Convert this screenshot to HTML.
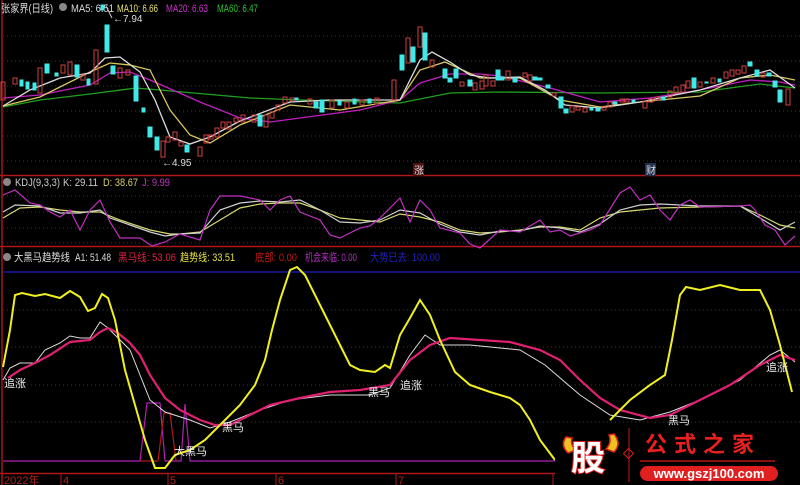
<!DOCTYPE html>
<html><head><meta charset="utf-8"><style>
html,body{margin:0;padding:0;background:#000;width:800px;height:485px;overflow:hidden}
svg{display:block}
text{font-family:"Liberation Sans","Noto Sans CJK SC",sans-serif}
</style></head><body>
<svg width="800" height="485" viewBox="0 0 800 485" xmlns="http://www.w3.org/2000/svg">
<rect width="800" height="485" fill="#000"/>
<line x1="2" y1="0" x2="2" y2="485" stroke="#a01818" stroke-width="1.5"/>
<line x1="0" y1="175.5" x2="800" y2="175.5" stroke="#b01818" stroke-width="1.5"/>
<line x1="0" y1="246.5" x2="800" y2="246.5" stroke="#b01818" stroke-width="1.5"/>
<line x1="0" y1="473.5" x2="800" y2="473.5" stroke="#b01818" stroke-width="1.5"/>
<g stroke="#7a1a1a" stroke-dasharray="1,3" stroke-width="1">
<line x1="3" y1="36" x2="800" y2="36"/><line x1="3" y1="61" x2="800" y2="61"/><line x1="3" y1="86" x2="800" y2="86"/><line x1="3" y1="111" x2="800" y2="111"/><line x1="3" y1="136" x2="800" y2="136"/><line x1="3" y1="161" x2="800" y2="161"/>
<line x1="3" y1="196" x2="800" y2="196"/><line x1="3" y1="212" x2="800" y2="212"/><line x1="3" y1="228" x2="800" y2="228"/><line x1="3" y1="243" x2="800" y2="243"/>
<line x1="3" y1="310" x2="800" y2="310"/><line x1="3" y1="347" x2="800" y2="347"/><line x1="3" y1="385" x2="800" y2="385"/><line x1="3" y1="422" x2="800" y2="422"/>
</g>
<g font-size="11">
<text x="1" y="12" fill="#ddd" textLength="52" lengthAdjust="spacingAndGlyphs">张家界(日线)</text>
<circle cx="63" cy="7" r="4" fill="#888"/>
<text x="71" y="12" fill="#ddd" textLength="43" lengthAdjust="spacingAndGlyphs">MA5: 6.51</text>
<text x="117" y="12" fill="#e8e070" textLength="41" lengthAdjust="spacingAndGlyphs">MA10: 6.66</text>
<text x="166" y="12" fill="#d030d0" textLength="42" lengthAdjust="spacingAndGlyphs">MA20: 6.63</text>
<text x="217" y="12" fill="#30c030" textLength="41" lengthAdjust="spacingAndGlyphs">MA60: 6.47</text>
<circle cx="7" cy="182" r="4" fill="#888"/>
<text x="15" y="186" fill="#ccc" textLength="45" lengthAdjust="spacingAndGlyphs">KDJ(9,3,3)</text>
<text x="63" y="186" fill="#ccc" textLength="35" lengthAdjust="spacingAndGlyphs">K: 29.11</text>
<text x="103" y="186" fill="#d8d070" textLength="35" lengthAdjust="spacingAndGlyphs">D: 38.67</text>
<text x="142" y="186" fill="#c030c0" textLength="28" lengthAdjust="spacingAndGlyphs">J: 9.99</text>
<circle cx="7" cy="257" r="4" fill="#888"/>
<text x="14" y="261" fill="#ddd" textLength="56" lengthAdjust="spacingAndGlyphs">大黑马趋势线</text>
<text x="75" y="261" fill="#ddd" textLength="36" lengthAdjust="spacingAndGlyphs">A1: 51.48</text>
<text x="118" y="261" fill="#e02040" textLength="58" lengthAdjust="spacingAndGlyphs">黑马线: 53.06</text>
<text x="180" y="261" fill="#e8e040" textLength="55" lengthAdjust="spacingAndGlyphs">趋势线: 33.51</text>
<text x="255" y="261" fill="#c01818" textLength="42" lengthAdjust="spacingAndGlyphs">底部: 0.00</text>
<text x="305" y="261" fill="#b030c0" textLength="52" lengthAdjust="spacingAndGlyphs">机会来临: 0.00</text>
<text x="370" y="261" fill="#2020c0" textLength="70" lengthAdjust="spacingAndGlyphs">大势已去: 100.00</text>
</g>
<g fill="none" stroke-width="1.3">
<polyline stroke="#20a020" points="3,107 40,100 90,94 136,88 160,90 250,98 300,100 400,103 450,93 500,92 600,93 700,92 760,84 795,88"/>
<polyline stroke="#c020c0" points="3,98 40,95 90,85 110,73 130,72 150,80 200,102 240,118 270,122 300,118 360,110 400,100 420,83 450,74 480,74 500,76 550,88 600,102 650,98 700,90 750,80 780,82 795,85"/>
<polyline stroke="#d8c860" points="3,106 40,97 90,72 110,63 130,65 150,70 170,110 190,135 210,143 240,125 290,105 340,110 400,100 420,70 445,62 480,78 520,78 560,100 600,107 640,102 700,96 740,78 770,75 795,80"/>
<polyline stroke="#ddd" points="3,106 30,90 60,78 90,73 105,58 120,57 140,72 155,100 170,137 190,144 210,137 240,121 290,102 330,100 400,100 420,60 432,52 450,62 470,75 490,78 520,77 545,90 565,105 600,108 640,102 700,90 740,78 770,70 795,88"/>
</g>
<g stroke-width="1">
<g fill="none" stroke="#d04040">
<rect x="1" y="82" width="4" height="18"/><rect x="13" y="78" width="4" height="6"/><rect x="38" y="68" width="4" height="25"/><rect x="61" y="65" width="4" height="8"/><rect x="68" y="62" width="4" height="13"/><rect x="81" y="75" width="4" height="5"/><rect x="94" y="50" width="4" height="34"/><rect x="118" y="68" width="4" height="10"/><rect x="126" y="70" width="4" height="5"/><rect x="161" y="141" width="4" height="16"/><rect x="166" y="137" width="4" height="5"/><rect x="173" y="132" width="4" height="8"/><rect x="179" y="142" width="4" height="4"/><rect x="198" y="147" width="4" height="9"/><rect x="204" y="135" width="4" height="8"/><rect x="209" y="135" width="4" height="4"/><rect x="215" y="128" width="4" height="9"/><rect x="221" y="122" width="4" height="6"/><rect x="227" y="122" width="4" height="7"/><rect x="234" y="118" width="4" height="4"/><rect x="241" y="115" width="4" height="7"/><rect x="252" y="115" width="4" height="7"/><rect x="264" y="115" width="4" height="12"/><rect x="270" y="112" width="4" height="6"/><rect x="276" y="105" width="4" height="5"/><rect x="283" y="97" width="4" height="6"/><rect x="290" y="98" width="4" height="3"/><rect x="308" y="99" width="4" height="5"/><rect x="330" y="100" width="4" height="8"/><rect x="345" y="102" width="4" height="6"/><rect x="360" y="100" width="4" height="5"/><rect x="375" y="98" width="4" height="6"/><rect x="392" y="80" width="4" height="20"/>
<rect x="406" y="38" width="4" height="25"/><rect x="418" y="27" width="4" height="20"/><rect x="430" y="60" width="4" height="7"/><rect x="460" y="82" width="4" height="4"/><rect x="473" y="83" width="4" height="7"/><rect x="480" y="81" width="4" height="8"/><rect x="484" y="75" width="4" height="11"/><rect x="491" y="81" width="4" height="5"/><rect x="506" y="71" width="4" height="9"/><rect x="523" y="73" width="4" height="4"/><rect x="528" y="75" width="4" height="6"/><rect x="552" y="93" width="4" height="3"/><rect x="570" y="106" width="4" height="6"/><rect x="576" y="107" width="4" height="3"/><rect x="583" y="108" width="4" height="4"/><rect x="602" y="107" width="4" height="3"/><rect x="608" y="102" width="4" height="5"/><rect x="620" y="99" width="4" height="3"/><rect x="625" y="99" width="4" height="3"/><rect x="643" y="101" width="4" height="7"/><rect x="649" y="99" width="4" height="3"/><rect x="655" y="97" width="4" height="3"/><rect x="668" y="91" width="4" height="6"/><rect x="674" y="87" width="4" height="6"/><rect x="681" y="85" width="4" height="7"/><rect x="686" y="81" width="4" height="7"/><rect x="698" y="82" width="4" height="5"/><rect x="711" y="78" width="4" height="5"/><rect x="724" y="72" width="4" height="6"/><rect x="730" y="70" width="4" height="6"/><rect x="736" y="70" width="4" height="4"/><rect x="742" y="66" width="4" height="7"/><rect x="761" y="73" width="4" height="4"/><rect x="786" y="89" width="4" height="16"/>
</g>
<g fill="#40e8e8" stroke="#40e8e8">
<rect x="20" y="80" width="3" height="6"/><rect x="26" y="82" width="3" height="7"/><rect x="33" y="83" width="3" height="7"/><rect x="45" y="64" width="4" height="9"/><rect x="55" y="73" width="3" height="3"/><rect x="75" y="65" width="4" height="12"/><rect x="87" y="79" width="3" height="6"/><rect x="105" y="25" width="4" height="27"/><rect x="101" y="5" width="3" height="5"/><rect x="111" y="66" width="4" height="8"/><rect x="134" y="76" width="4" height="25"/><rect x="142" y="108" width="3" height="4"/><rect x="148" y="127" width="4" height="10"/><rect x="155" y="137" width="4" height="13"/><rect x="185" y="145" width="4" height="7"/><rect x="258" y="115" width="4" height="11"/><rect x="295" y="98" width="3" height="2"/><rect x="314" y="102" width="4" height="6"/><rect x="320" y="100" width="4" height="12"/><rect x="338" y="101" width="3" height="4"/><rect x="353" y="99" width="3" height="5"/><rect x="368" y="99" width="3" height="4"/>
<rect x="400" y="55" width="4" height="15"/><rect x="411" y="47" width="4" height="15"/><rect x="423" y="33" width="4" height="27"/><rect x="443" y="69" width="4" height="9"/><rect x="448" y="78" width="4" height="4"/><rect x="454" y="69" width="4" height="9"/><rect x="468" y="80" width="4" height="6"/><rect x="496" y="70" width="4" height="10"/><rect x="501" y="77" width="3" height="3"/><rect x="513" y="78" width="4" height="4"/><rect x="533" y="77" width="4" height="3"/><rect x="538" y="78" width="4" height="2"/><rect x="546" y="85" width="4" height="3"/><rect x="559" y="97" width="4" height="11"/><rect x="564" y="109" width="4" height="4"/><rect x="590" y="108" width="3" height="2"/><rect x="596" y="108" width="4" height="3"/><rect x="613" y="102" width="4" height="2"/><rect x="632" y="100" width="3" height="2"/><rect x="662" y="97" width="3" height="3"/><rect x="692" y="78" width="4" height="10"/><rect x="705" y="82" width="3" height="1"/><rect x="718" y="79" width="3" height="3"/><rect x="748" y="62" width="4" height="4"/><rect x="755" y="70" width="4" height="6"/><rect x="767" y="73" width="4" height="3"/><rect x="773" y="81" width="4" height="6"/><rect x="778" y="90" width="4" height="12"/>
</g>
</g>
<text x="113" y="22" font-size="10" fill="#ddd">←7.94</text>
<line x1="106" y1="6" x2="112" y2="18" stroke="#ccc"/>
<text x="162" y="166" font-size="10" fill="#ddd">←4.95</text>
<rect x="413" y="163" width="11" height="13" fill="#501010"/>
<text x="414" y="174" font-size="10" fill="#ddd">涨</text>
<rect x="645" y="163" width="11" height="13" fill="#203050"/>
<text x="646" y="174" font-size="10" fill="#ddd">财</text>
<g fill="none" stroke-width="1.2">
<polyline stroke="#d8d870" points="3,218 20,208 40,207 60,210 80,212 100,212 120,220 150,230 170,234 180,234 200,232 220,220 240,208 260,204 280,203 300,203 320,210 340,218 360,220 380,222 400,214 420,217 440,222 460,230 480,233 500,232 520,230 540,227 560,227 580,230 600,218 620,212 640,210 660,208 700,207 740,206 760,215 780,225 795,228"/>
<polyline stroke="#cfcfcf" points="3,212 15,205 40,206 60,213 80,213 100,210 110,218 130,225 150,232 165,236 180,234 200,233 220,210 240,203 260,201 280,202 300,200 320,210 340,222 360,223 380,220 400,210 420,213 440,224 460,232 480,235 500,231 520,231 540,226 560,228 580,232 600,224 620,210 640,205 660,204 700,206 740,206 760,218 780,230 795,222"/>
<polyline stroke="#c030c0" points="3,195 15,190 30,203 40,205 50,212 60,217 70,210 80,230 90,210 100,200 110,222 120,238 140,238 152,246 165,242 180,234 200,240 210,210 220,196 240,196 260,200 270,210 280,200 290,196 300,212 320,220 330,235 340,238 360,228 370,226 380,218 400,198 410,222 420,200 430,210 440,228 460,233 470,244 480,248 500,230 520,232 540,220 550,232 560,230 570,236 590,230 600,225 620,193 630,187 640,200 650,195 660,210 670,220 680,205 690,200 700,207 740,206 750,205 755,210 765,225 775,230 785,245 795,236"/>
</g>
<line x1="3" y1="272" x2="800" y2="272" stroke="#1a1aa0" stroke-width="1.5"/>
<polyline fill="none" stroke="#b020b0" stroke-width="1.2" points="3,461 140,461 147,403 160,403 165,461 176,461 181,461 185,404 190,461 555,461"/>
<polyline fill="none" stroke="#b01818" stroke-width="1.2" points="140,461 158,461 164,413 170,413 176,461"/>
<polyline fill="none" stroke="#ddd" stroke-width="1" points="3,380 10,368 20,363 35,363 45,350 60,343 70,336 80,338 90,338 100,322 108,328 120,340 130,350 140,375 150,400 165,412 190,420 210,428 230,422 260,410 290,400 330,395 370,395 390,388 410,355 425,335 440,345 470,345 520,350 545,365 580,395 610,415 640,420 670,412 700,400 740,380 770,355 780,350 795,362"/>
<polyline fill="none" stroke="#e02070" stroke-width="2.2" points="8,378 20,370 35,363 50,355 70,342 90,340 100,332 108,328 118,333 130,343 140,355 150,375 165,398 180,410 200,420 215,425 230,425 250,415 270,405 300,398 330,392 360,390 390,385 410,360 430,345 450,338 480,340 510,342 540,350 560,360 580,380 600,398 620,410 650,418 670,415 700,400 730,385 760,365 780,355 795,360"/>
<polyline fill="none" stroke="#f0f020" stroke-width="2" points="3,367 10,330 15,295 22,293 35,296 45,294 60,298 70,291 80,297 88,311 95,308 102,294 108,298 115,320 125,370 135,405 145,440 155,468 165,468 175,455 190,450 205,440 220,425 240,405 255,385 265,360 272,330 280,300 290,270 297,267 305,275 315,295 325,315 335,335 350,365 360,370 375,372 385,365 390,368 400,335 410,318 420,300 430,315 440,340 455,372 470,385 490,392 510,398 520,405 530,420 540,440 555,460"/>
<polyline fill="none" stroke="#f0f020" stroke-width="2" points="610,420 630,400 650,385 665,375 672,340 680,295 686,287 700,290 720,285 740,290 760,290 770,310 780,345 792,392"/>
<g font-size="11" fill="#eee">
<text x="4" y="387">追涨</text>
<text x="368" y="396">黑马</text>
<text x="400" y="389">追涨</text>
<text x="222" y="431">黑马</text>
<text x="174" y="455">大黑马</text>
<text x="668" y="424">黑马</text>
<text x="766" y="371">追涨</text>
</g>
<g stroke="#b01818"><line x1="61" y1="474" x2="61" y2="485"/><line x1="168" y1="474" x2="168" y2="485"/><line x1="276" y1="474" x2="276" y2="485"/><line x1="396" y1="474" x2="396" y2="485"/><line x1="553" y1="474" x2="553" y2="485"/></g>
<g font-size="11" fill="#b02020"><text x="4" y="484">2022年</text><text x="63" y="484">4</text><text x="170" y="484">5</text><text x="278" y="484">6</text><text x="398" y="484">7</text></g>
<rect x="555" y="426" width="245" height="59" fill="#000"/>
<path d="M566,437 q-6,8 2,16 l8,-3 q-6,-5 -4,-12z" fill="#f0c020" stroke="#e02020" stroke-width="1.5"/>
<path d="M614,434 q8,10 0,18 l-8,-3 q6,-6 3,-14z" fill="#f0c020" stroke="#e02020" stroke-width="1.5"/>
<text x="571" y="470" font-size="34" font-weight="bold" fill="#fff" stroke="#e02020" stroke-width="2" paint-order="stroke" font-family="Noto Sans CJK SC,sans-serif">股</text>
<line x1="629" y1="428" x2="629" y2="482" stroke="#c01818"/>
<rect x="625" y="450" width="7" height="7" fill="none" stroke="#e02020" transform="rotate(45 628.5 453.5)"/>
<text x="645" y="452" font-size="22" font-weight="bold" fill="#e82020" letter-spacing="7" font-family="Noto Serif CJK SC,serif">公式之家</text>
<line x1="640" y1="461" x2="775" y2="461" stroke="#b01818" stroke-width="1.5"/>
<rect x="640" y="466" width="138" height="15" rx="7.5" fill="#e02020"/>
<text x="709" y="478" font-size="13" font-weight="bold" fill="#fff" text-anchor="middle">www.gszj100.com</text>
</svg>
</body></html>
